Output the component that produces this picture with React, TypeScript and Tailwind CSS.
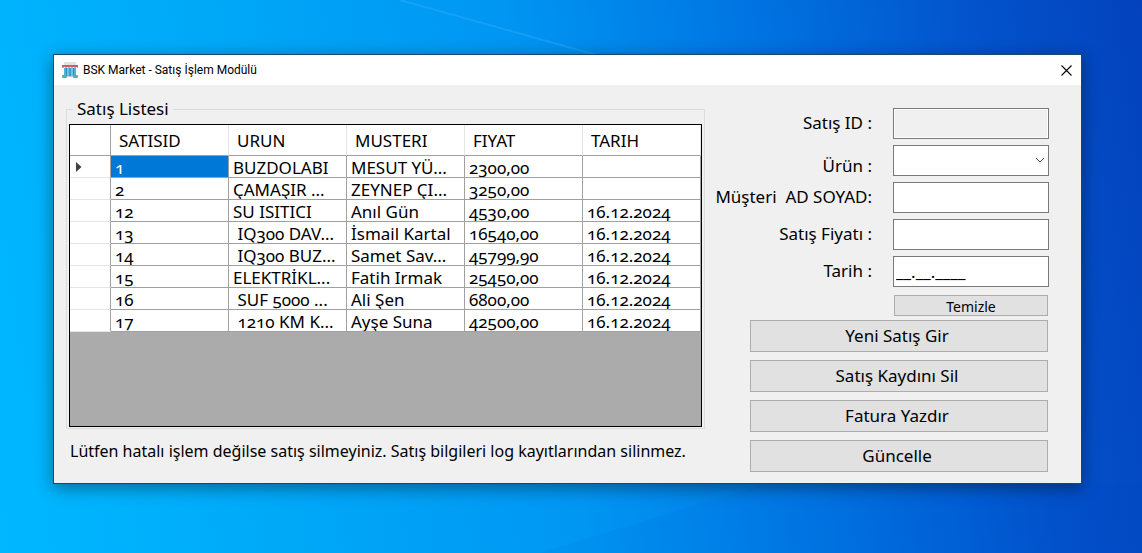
import React from "react";

type Sale = { id: string; product: string; customer: string; price: string; date: string };

const sales: Sale[] = [
  { id: "1", product: "BUZDOLABI", customer: "MESUT YÜ...", price: "2300,00", date: "" },
  { id: "2", product: "ÇAMAŞIR ...", customer: "ZEYNEP ÇI...", price: "3250,00", date: "" },
  { id: "12", product: "SU ISITICI", customer: "Anıl Gün", price: "4530,00", date: "16.12.2024" },
  { id: "13", product: " IQ300 DAV...", customer: "İsmail Kartal", price: "16540,00", date: "16.12.2024" },
  { id: "14", product: " IQ300 BUZ...", customer: "Samet Sav...", price: "45799,90", date: "16.12.2024" },
  { id: "15", product: "ELEKTRİKL...", customer: "Fatih Irmak", price: "25450,00", date: "16.12.2024" },
  { id: "16", product: " SUF 5000 ...", customer: "Ali Şen", price: "6800,00", date: "16.12.2024" },
  { id: "17", product: " 1210 KM K...", customer: "Ayşe Suna", price: "42500,00", date: "16.12.2024" },
];

const columns = ["SATISID", "URUN", "MUSTERI", "FIYAT", "TARIH"];

function ShopIcon() {
  return (
    <svg width="16" height="16" viewBox="0 0 16 16" aria-hidden="true">
      <rect x="2" y="0" width="12" height="3" fill="#dfe3e8" />
      <rect x="2" y="6" width="12" height="8" fill="#4fb3dc" />
      <path d="M4.500 6v8M8 6v8M11.500 6v8" stroke="#1f8fc4" strokeWidth="1" />
      <path d="M6 6v8M10 6v8" stroke="#8fd6f0" strokeWidth="1" />
      <rect x="0" y="3" width="16" height="2" fill="#cf5f57" />
      <path d="M0 5.500h16" stroke="#e9a09a" strokeWidth="1" strokeDasharray="2 1" />
      <rect x="0" y="13" width="5" height="3" rx="1" fill="#4db89a" />
      <rect x="11" y="13" width="5" height="3" rx="1" fill="#4db89a" />
      <rect x="5" y="14" width="6" height="1" fill="#c3ccd3" />
    </svg>
  );
}

function Field({ id, label, low, children }: { id: string; label: string; low?: boolean; children: React.ReactNode }) {
  return (
    <>
      <label htmlFor={id} className={`text-right whitespace-pre leading-5 ${low ? "self-end" : "self-center pb-px"}`}>
        {label}
      </label>
      {children}
    </>
  );
}

const box = "h-[31px] w-full border border-[#7a7a7a] bg-white px-[2px] outline-none";
const button = "h-8 border border-[#adadad] bg-[#e1e1e1] pr-1 leading-5";

export default function App() {
  return (
    <div className="relative min-h-screen overflow-hidden bg-[linear-gradient(81deg,#00b8ff_0%,#00abf9_20%,#0096f2_48%,#0074e2_68%,#0353cc_86%,#0342bc_100%)] pt-[54px] pr-[60px] pb-[69px] pl-[53px] font-['Noto_Sans',sans-serif] text-[17px] text-black oldstyle-nums">
      <svg className="absolute inset-0 h-full w-full" viewBox="0 0 1142 553" preserveAspectRatio="none" aria-hidden="true">
        <path d="M400 0L600 56" stroke="#3fb0ff" strokeOpacity="0.35" strokeWidth="2" />
        <path d="M765 484L540 553H1142V484z" fill="#0040c0" fillOpacity="0.05" />
      </svg>
      <main className="relative border border-[#1b4868] bg-[#f0f0f0] shadow-[0_4px_16px_rgba(0,0,0,0.4)]">
        <header className="flex h-[30px] items-center gap-[5px] bg-white pr-[7px] pl-2">
          <ShopIcon />
          <h1 className="flex-1 font-[Roboto,sans-serif] text-xs">BSK Market - Satış İşlem Modülü</h1>
          <button type="button" aria-label="Kapat" className="flex size-4 items-center justify-center">
            <svg width="11" height="11" viewBox="0 0 11 11" aria-hidden="true">
              <path d="M.5 .5l10 10M10.500 .5l-10 10" stroke="#000" strokeWidth="1.1" />
            </svg>
          </button>
        </header>

        <div className="flex pr-8 pb-[11px] pl-3">
          <section className="min-w-0 flex-1 pt-3">
            <fieldset className="min-w-0 border border-[#dcdcdc] px-[2px] pb-px">
              <legend className="ml-1 px-1 leading-6">Satış Listesi</legend>
              <div className="mt-[3px] h-[303px] overflow-hidden border border-black bg-[#ababab]">
                <table className="w-full table-fixed border-separate border-spacing-0 bg-white text-left">
                  <colgroup>
                    <col className="w-[41px]" />
                    <col />
                    <col />
                    <col />
                    <col />
                    <col />
                  </colgroup>
                  <thead>
                    <tr className="h-[31px]">
                      <th className="border-r border-b border-[#a0a0a0]" />
                      {columns.map((c) => (
                        <th key={c} className="border-r border-b border-r-[#e5e5e5] border-b-[#a0a0a0] p-0 pt-px pl-2 leading-5 font-normal">
                          {c}
                        </th>
                      ))}
                    </tr>
                  </thead>
                  <tbody>
                    {sales.map((s, i) => (
                      <tr key={s.id} className="h-[22px]">
                        <th className="border-r border-b border-r-[#a0a0a0] border-b-[#e5e5e5] p-0 pl-[6px]">
                          {i === 0 && (
                            <svg width="6" height="10" viewBox="0 0 6 10" aria-hidden="true">
                              <path d="M0 0l5.500 5L0 10z" fill="#404040" />
                            </svg>
                          )}
                        </th>
                        {[s.id, s.product, s.customer, s.price, s.date].map((v, j) => (
                          <td
                            key={j}
                            className={`overflow-hidden border-r border-b border-[#a0a0a0] p-0 pt-[3px] pl-1 leading-[18px] whitespace-pre ${i === 0 && j === 0 ? "bg-[#0078d7] text-white" : ""}`}
                          >
                            {v}
                          </td>
                        ))}
                      </tr>
                    ))}
                  </tbody>
                </table>
              </div>
            </fieldset>
            <p className="mt-[10px] pl-1 text-base leading-6 whitespace-nowrap">
              Lütfen hatalı işlem değilse satış silmeyiniz. Satış bilgileri log kayıtlarından silinmez.
            </p>
          </section>

          <form className="flex w-[344px] flex-none flex-col pt-[23px]" onSubmit={(e) => e.preventDefault()}>
            <div className="grid grid-cols-[1fr_156px] gap-x-[21px] gap-y-[6px]">
              <Field id="sale-id" label="Satış ID :">
                <input id="sale-id" readOnly className="h-[31px] w-full border border-[#7a7a7a] bg-[#f0f0f0] px-[2px] shadow-[inset_0_0_0_1px_#fff] outline-none" />
              </Field>
              <Field id="product" label="Ürün :" low>
                <div className="relative">
                  <select id="product" className={`${box} appearance-none`} />
                  <svg className="pointer-events-none absolute top-3 right-1" width="10" height="7" viewBox="0 0 10 7" aria-hidden="true">
                    <path d="M1 1l4 4 4-4" fill="none" stroke="#444" strokeWidth="1" />
                  </svg>
                </div>
              </Field>
              <Field id="customer" label="Müşteri  AD SOYAD:">
                <input id="customer" className={box} />
              </Field>
              <Field id="price" label="Satış Fiyatı :">
                <input id="price" className={box} />
              </Field>
              <Field id="date" label="Tarih :">
                <input id="date" defaultValue="__.__.____" className={box} />
              </Field>
            </div>
            <button type="button" className="mt-2 mr-px flex h-[21px] w-[154px] items-end justify-center self-end border border-[#adadad] bg-[#e1e1e1] text-sm leading-4">
              Temizle
            </button>
            <div className="mt-1 mr-px flex w-[298px] flex-col gap-2 self-end">
              <button type="submit" className={button}>Yeni Satış Gir</button>
              <button type="button" className={button}>Satış Kaydını Sil</button>
              <button type="button" className={button}>Fatura Yazdır</button>
              <button type="button" className={button}>Güncelle</button>
            </div>
          </form>
        </div>
      </main>
    </div>
  );
}
